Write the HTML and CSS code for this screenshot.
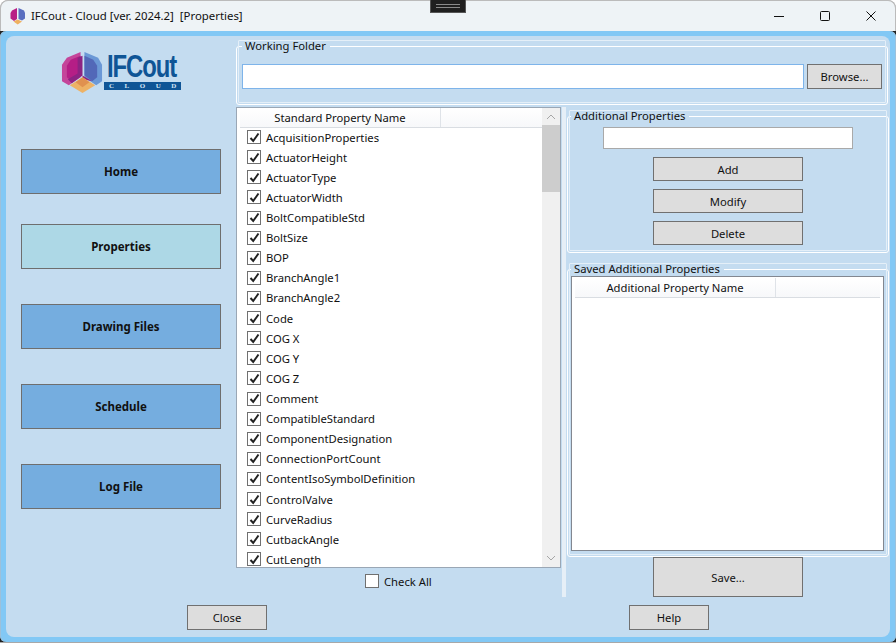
FILE: index.html
```html
<!DOCTYPE html>
<html lang="en">
<head>
<meta charset="utf-8">
<title>IFCout - Cloud [ver. 2024.2] [Properties]</title>
<link rel="stylesheet" href="styles.css">
</head>
<body>
<div class="window">
  <div class="grabber"><span class="grabber-lines"></span></div>
  <header class="titlebar">
    <svg class="app-icon" width="16" height="18" viewBox="0 0 16 18">
      <path d="M7 1 L2 3.500 L0.500 6 V11.500 L4 14 L7 12 Z" fill="#b81f86"/>
      <path d="M8.500 1 L14 3.500 L15 6 V11.500 L12 13.500 L8.500 12 Z" fill="#5a6fc0"/>
      <path d="M3.500 14.500 L7.700 12.500 L12 14.500 L7.700 17.500 Z" fill="#eeb060"/>
    </svg>
    <span class="title">IFCout - Cloud [ver. 2024.2]&nbsp; [Properties]</span>
    <div class="window-controls">
      <svg width="12" height="12" viewBox="0 0 12 12"><path d="M1 6.500H11" stroke="#111" fill="none"/></svg>
      <svg width="12" height="12" viewBox="0 0 12 12"><rect x="1.500" y="1.500" width="9" height="9" rx="1" stroke="#111" fill="none"/></svg>
      <svg width="12" height="12" viewBox="0 0 12 12"><path d="M1.500 1.500L10.500 10.500M10.500 1.500L1.500 10.500" stroke="#111" fill="none"/></svg>
    </div>
  </header>
  <div class="frame">
    <div class="frame-inner">
    <div class="content">
      <aside class="sidebar">
        <div class="logo">
          <svg class="logo-mark" width="43" height="43" viewBox="0 0 44 44">
            <path d="M20 2 L6 8 L1 15 V32 L8 36 L20 28 Z" fill="#c4459a"/>
            <path d="M20 6 L10 10 L6 16 V28 L11 32 L20 26 Z" fill="#b51e86"/>
            <path d="M24 2 L38 8 L42 15 V32 L36 36 L24 28 Z" fill="#6b98d6"/>
            <path d="M24 6 L33 10 L37 16 V28 L32 32 L24 26 Z" fill="#5268b8"/>
            <path d="M17 8 L22 6 L22 26 L11 34 L7 30 L17 24 Z" fill="#8c2383"/>
            <path d="M22 26 L32 32 L22 30 Z" fill="#8c2383"/>
            <path d="M9 36 L22 28 L35 36 L22 44 Z" fill="#edb265"/>
            <path d="M15 33 L22 28 L29 33 L22 38 Z" fill="#e0914f"/>
          </svg>
          <div class="logo-words">
            <span class="logo-name">IFCout</span>
            <span class="logo-sub">CLOUD</span>
          </div>
        </div>
        <nav class="nav">
          <button class="nav-btn">Home</button>
          <button class="nav-btn nav-btn-active">Properties</button>
          <button class="nav-btn">Drawing Files</button>
          <button class="nav-btn">Schedule</button>
          <button class="nav-btn">Log File</button>
        </nav>
      </aside>

      <main class="main">
        <fieldset class="group folder-group">
          <legend>Working Folder</legend>
          <div class="folder-row">
            <input class="folder-input" type="text">
            <button class="btn browse">Browse...</button>
          </div>
        </fieldset>

        <div class="panels">
          <section class="left-panel">
            <div class="list">
              <div class="list-body">
                <div class="list-head"><span class="head-cell">Standard Property Name</span><span class="head-rest"></span></div>
                <div class="rows" id="rows"></div>
              </div>
              <div class="scrollbar">
                <svg class="arrow" width="18" height="17" viewBox="0 0 18 17"><path d="M5 11L9 7L13 11" stroke="#a6a6a6" fill="none"/></svg>
                <div class="thumb"></div>
                <svg class="arrow arrow-down" width="18" height="17" viewBox="0 0 18 17"><path d="M5 6L9 10L13 6" stroke="#a6a6a6" fill="none"/></svg>
              </div>
            </div>
            <label class="check-all"><span class="box"></span>Check All</label>
          </section>
          <div class="splitter"></div>
          <section class="right-panel">
            <fieldset class="group add-group">
              <legend>Additional Properties</legend>
              <input class="add-input" type="text">
              <button class="btn action">Add</button>
              <button class="btn action">Modify</button>
              <button class="btn action">Delete</button>
            </fieldset>
            <fieldset class="group saved-group">
              <legend>Saved Additional Properties</legend>
              <div class="saved-list">
                <div class="list-head saved-head"><span class="head-cell saved-cell">Additional Property Name</span><span class="head-rest"></span></div>
              </div>
            </fieldset>
            <button class="btn save">Save...</button>
          </section>
        </div>
      </main>
      <div class="footer">
        <button class="btn foot close">Close</button>
        <button class="btn foot help">Help</button>
      </div>
    </div>
    </div>
  </div>
</div>
<script src="app.js"></script>
</body>
</html>
```
FILE: app.js
```js
var names = ["AcquisitionProperties","ActuatorHeight","ActuatorType","ActuatorWidth","BoltCompatibleStd","BoltSize","BOP","BranchAngle1","BranchAngle2","Code","COG X","COG Y","COG Z","Comment","CompatibleStandard","ComponentDesignation","ConnectionPortCount","ContentIsoSymbolDefinition","ControlValve","CurveRadius","CutbackAngle","CutLength"];
var rows = document.getElementById("rows");
names.forEach(function (n) {
  var r = document.createElement("div");
  r.className = "row";
  r.innerHTML = '<span class="box"><svg width="11" height="11" viewBox="0 0 11 11"><path d="M1.500 6L4.200 9L9.500 1.500" stroke="#222" stroke-width="2" fill="none"/></svg></span><span class="row-label"></span>';
  r.querySelector(".row-label").textContent = n;
  rows.appendChild(r);
});
```
FILE: styles.css
```css
* { box-sizing: border-box; }
html, body { margin: 0; padding: 0; height: 100%; background: #fff; overflow: hidden; }
body { font-family: "Noto Sans", "Open Sans", sans-serif; font-size: 11.25px; color: #111; }
button, input { font: inherit; color: inherit; margin: 0; }

.window { position: relative; width: 896px; height: 643px; display: flex; flex-direction: column; background: #a8a8a8; border-radius: 8px 8px 0 0; overflow: hidden; }
.grabber { position: absolute; left: 430px; top: 0; width: 36px; height: 13px; background: #1f1f1f; border: 1px solid #555; border-top: 0; display: flex; justify-content: center; padding-top: 4px; }
.grabber-lines { width: 24px; height: 4px; border-top: 1px solid #8a8a8a; border-bottom: 1px solid #8a8a8a; }

.titlebar { flex: none; height: 31px; display: flex; align-items: center; background: #eef3f6; padding-left: 9px; border: 1px solid #bbb; border-bottom: 0; border-radius: 8px 8px 0 0; }
.app-icon { flex: none; margin-top: -1px; }
.title { margin-left: 5px; margin-top: -2px; font-size: 11.4px; }
.window-controls { margin-left: auto; display: flex; gap: 34px; padding-right: 18px; margin-top: -1px; }

.frame { flex: 1; min-height: 0; background: #222; margin-bottom: 1px; }
.frame-inner { height: 100%; padding: 5px 6px 5px 6px; background: #82c8f5; border-radius: 6px; box-shadow: inset 1px 0 0 #9cc0da, inset -1px 0 0 #9cc0da; }
.content { position: relative; height: 100%; display: flex; background: #c4dcf0; border-radius: 8px; }

.sidebar { flex: none; width: 230px; padding: 14px 0 0 15px; }
.logo { display: flex; align-items: flex-start; margin-left: 40px; height: 99px; }
.logo-mark { flex: none; }
.logo-words { display: flex; flex-direction: column; margin-left: 0; margin-top: 2px; }
.logo-name { font-family: "Liberation Sans", sans-serif; font-weight: 700; font-size: 31px; line-height: 30px; color: #0f5596; letter-spacing: -1.4px; transform: scaleX(0.77); transform-origin: left; margin-left: 3px; white-space: nowrap; }
.logo-sub { width: 77px; height: 8px; background: #0f5596; color: #d5e6f5; font-family: "Liberation Serif", serif; font-weight: 700; font-size: 7px; line-height: 8px; letter-spacing: 10.500px; padding-left: 5px; white-space: nowrap; }

.nav { display: flex; flex-direction: column; }
.nav-btn { width: 200px; height: 45px; background: #75addf; border: 1px solid #6e6e6e; font-weight: 700; font-size: 11.5px; margin-bottom: 35px; padding: 0; }
.nav-btn:first-child { margin-bottom: 30px; }
.nav-btn-active { background: #add8e6; }

.main { flex: 1; min-width: 0; padding-right: 2px; display: flex; flex-direction: column; }
.group { margin: 0; border: 1px solid #fff; outline: 1px solid #e4eff8; outline-offset: -3px; border-radius: 3px; padding: 0; min-width: 0; }
.group legend { padding: 0 4px 0 3px; margin-left: 5px; font-size: 11.25px; line-height: 16px; }

.folder-group { flex: none; height: 67px; margin-top: 2px; padding: 10px 5px 0 5px; }
.folder-group legend { margin-left: 0; }
.folder-row { display: flex; gap: 3px; }
.folder-input { width: 562px; height: 25px; border: 1px solid #7eb4ea; background: #fff; padding: 0; outline: 0; }
.btn { background: #dddddd; border: 1px solid #707070; padding: 0; font-size: 11.25px; }
.browse { width: 75px; height: 25px; }

.panels { flex: none; display: flex; height: 490px; margin-top: 2px; }
.left-panel { flex: none; width: 325px; display: flex; flex-direction: column; }
.list { flex: none; height: 461px; display: flex; background: #fff; border: 1px solid #9aa7b5; overflow: hidden; }
.list-body { flex: 1; min-width: 0; padding-left: 3px; }
.list-head { height: 20px; display: flex; border-bottom: 1px solid #d9dde2; background: linear-gradient(#fff, #f7f8fa); }
.head-cell { width: 201px; border-right: 1px solid #dfe3e8; text-align: center; line-height: 19px; }
.head-rest { flex: 1; }
.rows { padding-left: 7px; margin-top: -0.95px; }
.row { height: 20.110px; display: flex; align-items: center; white-space: nowrap; }
.box { flex: none; width: 14px; height: 14px; background: #fff; border: 1px solid #707070; display: flex; align-items: center; justify-content: center; }
.row-label { margin-left: 5px; }
.scrollbar { flex: none; width: 18px; background: #f0f0f0; display: flex; flex-direction: column; }
.arrow { flex: none; }
.arrow-down { margin-top: auto; }
.thumb { flex: none; height: 67px; background: #cdcdcd; }
.check-all { flex: none; display: flex; align-items: center; gap: 5px; margin: 5px 0 0 129px; height: 16px; }

.splitter { flex: none; width: 4px; margin-left: 1px; background: #e6eff7; }
.right-panel { flex: none; width: 322px; margin-left: 1px; display: flex; flex-direction: column; align-items: flex-start; }
.add-group { width: 100%; height: 145px; margin-top: 1px; display: flex; flex-direction: column; align-items: center; padding-top: 4px; }
.add-group legend { margin-left: 3px; }
.add-input { display: block; width: 250px; height: 22px; border: 1px solid #a9a9a9; background: #fff; margin: -1px auto 8px; padding: 0; }
.action { display: block; width: 150px; height: 24px; margin: 0 auto 8px; }
.saved-group { width: 100%; height: 297px; margin-top: 8px; padding: 0 4px 4px 3px; }
.saved-group legend { margin-left: 0; }
.saved-list { height: 275px; background: #fff; border: 1px solid #828790; padding: 1px 3px 0 3px; margin-top: -1px; }
.saved-cell { width: 201px; }
.save { width: 150px; height: 40px; margin: 0 0 0 86px; }

.footer { position: absolute; left: 181px; top: 569px; display: flex; gap: 362px; }
.foot { width: 80px; height: 25px; }
```
